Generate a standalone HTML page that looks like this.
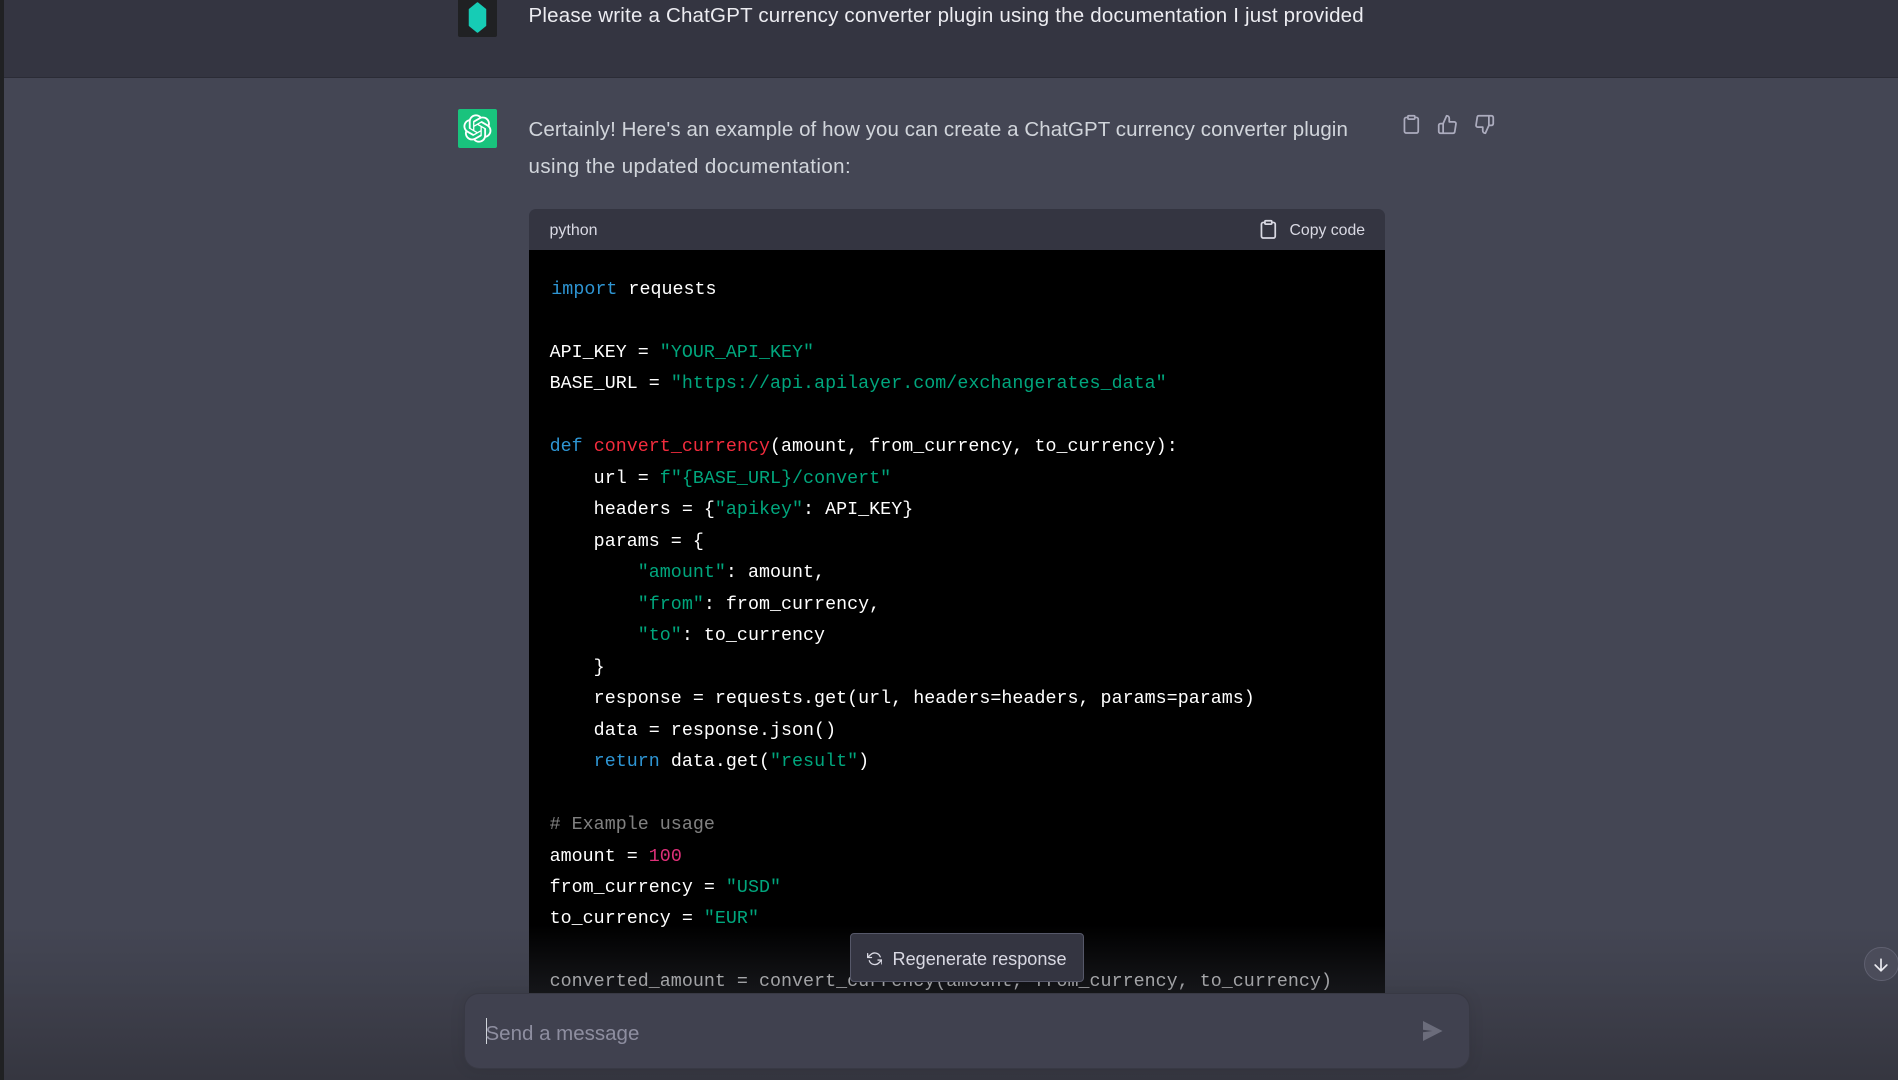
<!DOCTYPE html>
<html><head><meta charset="utf-8"><style>
html,body{margin:0;padding:0;width:1898px;height:1080px;overflow:hidden;background:#444654;font-family:"Liberation Sans",sans-serif}
div,pre,svg,span.a{position:absolute}
.t{white-space:nowrap;font-size:20.5px;line-height:37px}
pre{margin:0;left:549.6px;top:273.8px;font:18.32px/31.48px "Liberation Mono",monospace;letter-spacing:.03px;color:#fff}
.k{color:#2e95d3}.s{color:#00a67d}.f{color:#f22c3d}.n{color:#df3079}.c{color:rgba(255,255,255,.5)}
svg{fill:none;stroke-linecap:round;stroke-linejoin:round}
</style></head><body>
<div style="left:0;top:0;width:1898px;height:77px;background:#343541;border-bottom:1px solid #2b2c36"></div>
<div style="left:458px;top:-3px;width:38.5px;height:39.5px;background:#202123;border-radius:2px"></div>
<svg style="left:467.5px;top:1px" width="19" height="33" viewBox="0 0 19 33"><path d="M9.5 2L17.5 8.5V24.5L9.5 31L1.5 24.5V8.5Z" fill="#16ccb5" stroke="#16ccb5" stroke-width="1.5"/></svg>
<div class="t" style="left:528.5px;top:-3.3px;color:#ececf1;letter-spacing:.2px">Please write a ChatGPT currency converter plugin using the documentation I just provided</div>

<div style="left:458px;top:109px;width:39px;height:39px;background:#19c37d;border-radius:2px"></div>
<svg style="left:463px;top:114px" width="29" height="29" viewBox="0 0 41 41"><path fill="#fff" d="M37.5324 16.8707C37.9808 15.5241 38.1363 14.0974 37.9886 12.6859C37.8409 11.2744 37.3934 9.91076 36.676 8.68622C35.6126 6.83404 33.9882 5.3676 32.0373 4.4985C30.0864 3.62941 27.9098 3.40259 25.8215 3.85078C24.8796 2.7893 23.7219 1.94125 22.4257 1.36341C21.1295 0.785575 19.7249 0.491269 18.3058 0.500197C16.1708 0.495044 14.0893 1.16803 12.3614 2.42214C10.6335 3.67624 9.34853 5.44666 8.6917 7.47815C7.30085 7.76286 5.98686 8.3414 4.8377 9.17505C3.68854 10.0087 2.73073 11.0782 2.02839 12.312C0.956464 14.1591 0.498905 16.2988 0.721698 18.4228C0.944492 20.5467 1.83612 22.5449 3.268 24.1293C2.81966 25.4759 2.66413 26.9026 2.81182 28.3141C2.95951 29.7256 3.40701 31.0892 4.12437 32.3138C5.18791 34.1659 6.8123 35.6322 8.76321 36.5013C10.7141 37.3704 12.8907 37.5973 14.9789 37.1492C15.9208 38.2107 17.0786 39.0587 18.3747 39.6366C19.6709 40.2144 21.0755 40.5087 22.4946 40.4998C24.6307 40.5054 26.7133 39.8321 28.4418 38.5772C30.1704 37.3223 31.4556 35.5506 32.1119 33.5179C33.5027 33.2332 34.8167 32.6547 35.9659 31.821C37.115 30.9874 38.0728 29.9178 38.7752 28.684C39.8458 26.8371 40.3023 24.6979 40.0789 22.5748C39.8556 20.4517 38.9639 18.4544 37.5324 16.8707ZM22.4978 37.8849C20.7443 37.8874 19.0459 37.2733 17.6994 36.1501C17.7601 36.117 17.8666 36.0586 17.936 36.0161L25.9004 31.4156C26.1003 31.3019 26.2663 31.137 26.3813 30.9378C26.4964 30.7386 26.5563 30.5124 26.5549 30.2825V19.0542L29.9213 20.998C29.9389 21.0068 29.9541 21.0198 29.9656 21.0359C29.977 21.052 29.9842 21.0707 29.9867 21.0902V30.3889C29.9842 32.375 29.1946 34.2791 27.7909 35.6841C26.3872 37.0892 24.4838 37.8806 22.4978 37.8849ZM6.39227 31.0064C5.51397 29.4888 5.19742 27.7107 5.49804 25.9832C5.55718 26.0187 5.66048 26.0818 5.73461 26.1244L13.699 30.7248C13.8975 30.8408 14.1233 30.902 14.3532 30.902C14.583 30.902 14.8088 30.8408 15.0073 30.7248L24.731 25.1103V28.9979C24.7321 29.0177 24.7283 29.0376 24.7199 29.0556C24.7115 29.0736 24.6988 29.0893 24.6829 29.1012L16.6317 33.7497C14.9096 34.7416 12.8643 35.0097 10.9447 34.4954C9.02506 33.9811 7.38785 32.7263 6.39227 31.0064ZM4.29707 13.6194C5.17156 12.0998 6.55279 10.9364 8.19885 10.3327C8.19885 10.4013 8.19491 10.5228 8.19491 10.6071V19.808C8.19351 20.0378 8.25334 20.2638 8.36823 20.4629C8.48312 20.6619 8.64893 20.8267 8.84863 20.9404L18.5723 26.5542L15.206 28.4979C15.1894 28.5089 15.1703 28.5155 15.1505 28.5173C15.1307 28.5191 15.1107 28.516 15.0924 28.5082L7.04046 23.8557C5.32135 22.8601 4.06716 21.2235 3.55289 19.3046C3.03862 17.3858 3.30624 15.3413 4.29707 13.6194ZM31.955 20.0556L22.2312 14.4411L25.5976 12.4981C25.6142 12.4872 25.6333 12.4805 25.6531 12.4787C25.6729 12.4769 25.6928 12.4801 25.7111 12.4879L33.7631 17.1364C34.9967 17.849 36.0017 18.8982 36.6606 20.1613C37.3194 21.4244 37.6047 22.849 37.4832 24.2684C37.3617 25.6878 36.8382 27.0432 35.9743 28.1759C35.1103 29.3086 33.9415 30.1717 32.6047 30.6641C32.6047 30.5947 32.6047 30.4733 32.6047 30.3889V21.188C32.6066 20.9586 32.5474 20.7328 32.4332 20.5338C32.319 20.3348 32.154 20.1698 31.955 20.0556ZM35.3055 15.0128C35.2464 14.9765 35.1431 14.9142 35.069 14.8717L27.1045 10.2712C26.906 10.1554 26.6803 10.0943 26.4504 10.0943C26.2206 10.0943 25.9948 10.1554 25.7963 10.2712L16.0726 15.8858V11.9982C16.0715 11.9783 16.0753 11.9585 16.0837 11.9405C16.0921 11.9225 16.1048 11.9068 16.1207 11.8949L24.1719 7.25025C25.4053 6.53903 26.8158 6.19376 28.2383 6.25482C29.6608 6.31589 31.0364 6.78077 32.2044 7.59508C33.3723 8.40939 34.2842 9.53945 34.8334 10.8531C35.3826 12.1667 35.5464 13.6095 35.3055 15.0128ZM14.2424 21.9419L10.8752 19.9981C10.8576 19.9893 10.8423 19.9763 10.8309 19.9602C10.8195 19.9441 10.8122 19.9254 10.8098 19.9058V10.6071C10.8107 9.18295 11.2173 7.78848 11.9819 6.58696C12.7466 5.38544 13.8377 4.42659 15.1275 3.82264C16.4173 3.21869 17.8524 2.99464 19.2649 3.1767C20.6775 3.35876 22.0089 3.93941 23.1034 4.85067C23.0427 4.88379 22.937 4.94215 22.8668 4.98473L14.9024 9.58517C14.7025 9.69878 14.5366 9.86356 14.4215 10.0626C14.3065 10.2616 14.2466 10.4877 14.2479 10.7175L14.2424 21.9419ZM16.071 17.9991L20.4018 15.4978L24.7325 17.9975V22.9985L20.4018 25.4983L16.071 22.9985V17.9991Z"/></svg>
<div class="t" style="left:528.5px;top:110.5px;color:#d1d5db;letter-spacing:.08px">Certainly! Here's an example of how you can create a ChatGPT currency converter plugin</div>
<div class="t" style="left:528.5px;top:147.5px;color:#d1d5db;letter-spacing:.43px">using the updated documentation:</div>

<svg style="left:1401px;top:114px" width="20.7" height="20.7" viewBox="0 0 24 24" stroke="#acacbe" stroke-width="2"><path d="M16 4h2a2 2 0 0 1 2 2v14a2 2 0 0 1-2 2H6a2 2 0 0 1-2-2V6a2 2 0 0 1 2-2h2"/><rect x="8" y="2" width="8" height="4" rx="1"/></svg>
<svg style="left:1437px;top:114px" width="21" height="21" viewBox="0 0 24 24" stroke="#acacbe" stroke-width="2"><path d="M14 9V5a3 3 0 0 0-3-3l-4 9v11h11.28a2 2 0 0 0 2-1.7l1.38-9a2 2 0 0 0-2-2.3zM7 22H4a2 2 0 0 1-2-2v-7a2 2 0 0 1 2-2h3"/></svg>
<svg style="left:1474px;top:114px" width="21" height="21" viewBox="0 0 24 24" stroke="#acacbe" stroke-width="2"><path d="M10 15v4a3 3 0 0 0 3 3l4-9V2H5.72a2 2 0 0 0-2 1.7l-1.38 9a2 2 0 0 0 2 2.3zm7-13h2.67A2.31 2.31 0 0 1 22 4v7a2.31 2.31 0 0 1-2.33 2H17"/></svg>

<div style="left:528.5px;top:209px;width:856.5px;height:41px;background:#343541;border-radius:7px 7px 0 0"></div>
<div style="left:549.5px;top:210px;line-height:41px;font-size:16px;color:#d9d9e3;white-space:nowrap">python</div>
<svg style="left:1258.2px;top:219.2px" width="20.7" height="20.7" viewBox="0 0 24 24" stroke="#d9d9e3" stroke-width="2"><path d="M16 4h2a2 2 0 0 1 2 2v14a2 2 0 0 1-2 2H6a2 2 0 0 1-2-2V6a2 2 0 0 1 2-2h2"/><rect x="8" y="2" width="8" height="4" rx="1"/></svg>
<div style="left:1289.5px;top:210px;line-height:41px;font-size:15.8px;color:#d9d9e3;white-space:nowrap">Copy code</div>

<div style="left:528.5px;top:250px;width:856.5px;height:744px;background:#000"></div>
<pre><span class="k" style="margin-left:1.7px">import</span> requests

API_KEY = <span class="s">"YOUR_API_KEY"</span>
BASE_URL = <span class="s">"https://api.apilayer.com/exchangerates_data"</span>

<span class="k">def</span> <span class="f">convert_currency</span>(amount, from_currency, to_currency):
    url = <span class="s">f"{BASE_URL}/convert"</span>
    headers = {<span class="s">"apikey"</span>: API_KEY}
    params = {
        <span class="s">"amount"</span>: amount,
        <span class="s">"from"</span>: from_currency,
        <span class="s">"to"</span>: to_currency
    }
    response = requests.get(url, headers=headers, params=params)
    data = response.json()
    <span class="k">return</span> data.get(<span class="s">"result"</span>)

<span class="c"># Example usage</span>
amount = <span class="n">100</span>
from_currency = <span class="s">"USD"</span>
to_currency = <span class="s">"EUR"</span>

<span style="color:#dcdcdc">converted_amount = convert_currency(amount, from_currency, to_currency)</span></pre>

<div style="left:4px;top:925px;width:1894px;height:69px;background:linear-gradient(180deg,rgba(53,55,64,0),rgba(53,55,64,.42))"></div>
<div style="left:4px;top:994px;width:1894px;height:86px;background:linear-gradient(180deg,#3e3f4b,#353640)"></div>

<div style="left:850px;top:933px;width:232px;height:47px;background:#343541;border:1px solid #565869;border-radius:4px"></div>
<svg style="left:866.5px;top:951px" width="15.5" height="15.5" viewBox="0 0 24 24" stroke="#d9d9e3" stroke-width="2"><polyline points="1 4 1 10 7 10"/><polyline points="23 20 23 14 17 14"/><path d="M20.49 9A9 9 0 0 0 5.64 5.64L1 10m22 4l-4.64 4.36A9 9 0 0 1 3.51 15"/></svg>
<div style="left:892.5px;top:934.5px;line-height:49px;font-size:18.1px;color:#d9d9e3;white-space:nowrap">Regenerate response</div>

<div style="left:465px;top:994px;width:1004px;height:74px;background:#40414f;border-radius:14px;box-shadow:0 0 0 1px #383944,0 0 16px rgba(0,0,0,.1)"></div>
<div style="left:485.5px;top:1018px;width:1px;height:26px;background:#d1d5db"></div>
<div style="left:485.5px;top:1014.5px;line-height:37px;font-size:20.5px;color:#8e8ea0;white-space:nowrap">Send a message</div>
<svg style="left:1422.7px;top:1020.7px" width="20" height="20" viewBox="0 0 20 20"><path d="M0 0L19.5 10L0 20V11.2L9.5 10L0 8.8Z" fill="#6b6c7b"/></svg>

<div style="left:1864px;top:946.7px;width:32.5px;height:32.5px;border-radius:50%;background:#4b4c5a;border:1px solid #5f6070"></div>
<svg style="left:1871px;top:955px" width="20" height="20" viewBox="0 0 24 24" stroke="#ececf1" stroke-width="2"><path d="M12 5v14M19 12l-7 7-7-7"/></svg>

<div style="left:0;top:0;width:4px;height:1080px;background:#202123"></div>
</body></html>
